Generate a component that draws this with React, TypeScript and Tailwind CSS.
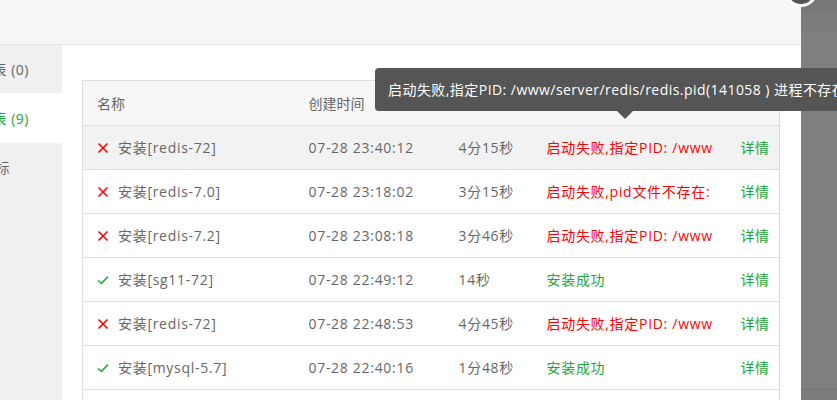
import React from "react";

type Row = {
  ok: boolean;
  name: string;
  time: string;
  cost: string;
  status: string;
  hover?: boolean;
};

const ROWS: Row[] = [
  { ok: false, name: "安装[redis-72]", time: "07-28 23:40:12", cost: "4分15秒", status: "启动失败,指定PID: /www/server/redis/redis.pid(141058 ) 进程不存在", hover: true },
  { ok: false, name: "安装[redis-7.0]", time: "07-28 23:18:02", cost: "3分15秒", status: "启动失败,pid文件不存在: /www/server/redis/redis.pid" },
  { ok: false, name: "安装[redis-7.2]", time: "07-28 23:08:18", cost: "3分46秒", status: "启动失败,指定PID: /www/server/redis/redis.pid" },
  { ok: true, name: "安装[sg11-72]", time: "07-28 22:49:12", cost: "14秒", status: "安装成功" },
  { ok: false, name: "安装[redis-72]", time: "07-28 22:48:53", cost: "4分45秒", status: "启动失败,指定PID: /www/server/redis/redis.pid" },
  { ok: true, name: "安装[mysql-5.7]", time: "07-28 22:40:16", cost: "1分48秒", status: "安装成功" },
  { ok: true, name: "安装[php-7.2]", time: "07-28 22:30:01", cost: "2分10秒", status: "安装成功" },
];

const FONT = { fontFamily: '"Open Sans", "Noto Sans CJK SC", sans-serif' };

function StatusIcon({ ok }: { ok: boolean }) {
  if (ok) {
    return (
      <svg width="12" height="12" viewBox="0 0 12 12" className="shrink-0">
        <path d="M1 6.5 L4.5 9.5 L11 2.5" fill="none" stroke="#20a53a" strokeWidth="1.6" />
      </svg>
    );
  }
  return (
    <svg width="12" height="12" viewBox="0 0 12 12" className="shrink-0">
      <path d="M1.5 1.5 L10.5 10.5 M10.5 1.5 L1.5 10.5" fill="none" stroke="#f00" strokeWidth="1.6" />
    </svg>
  );
}

function Sidebar() {
  const items = [
    { label: "列表 (0)", active: false, h: "h-[48px]", ml: "ml-[-22px]" },
    { label: "列表 (9)", active: true, h: "h-[50px]", ml: "ml-[-22px]" },
    { label: "指标", active: false, h: "h-[48px]", ml: "ml-[-19px]" },
  ];
  return (
    <div className="w-[62px] shrink-0 overflow-hidden bg-[#f0f0f0] tracking-[0.5px]">
      {items.map((it) => (
        <div
          key={it.label}
          className={`${it.h} flex items-center whitespace-nowrap text-[14px] ${
            it.active ? "bg-white text-[#20a53a]" : "text-[#666]"
          }`}
        >
          <span className={it.ml}>{it.label}</span>
        </div>
      ))}
    </div>
  );
}

function TaskTable() {
  return (
    <table className="w-[697px] table-fixed border-collapse border border-[#ddd] text-[14px] tracking-[0.7px] text-[#666]">
      <colgroup>
        <col className="w-[212px]" />
        <col className="w-[150px]" />
        <col className="w-[88px]" />
        <col className="w-[194px]" />
        <col className="w-[53px]" />
      </colgroup>
      <thead>
        <tr className="h-[45px] border-b border-[#ddd] bg-[#f6f6f6]">
          <th className="whitespace-nowrap px-[14px] text-left font-normal tracking-normal">名称</th>
          <th className="whitespace-nowrap px-[14px] text-left font-normal tracking-normal">创建时间</th>
          <th className="whitespace-nowrap px-[14px] text-left font-normal tracking-normal">耗时</th>
          <th className="whitespace-nowrap px-[14px] text-left font-normal tracking-normal">状态</th>
          <th className="whitespace-nowrap pl-[14px] text-left font-normal tracking-normal">操作</th>
        </tr>
      </thead>
      <tbody>
        {ROWS.map((r, i) => (
          <tr key={i} className={`h-[44px] border-b border-[#ddd] ${r.hover ? "bg-[#f2f2f2]" : "bg-white"}`}>
            <td className="px-[14px]">
              <div className="flex items-center gap-[9px] whitespace-nowrap">
                <StatusIcon ok={r.ok} />
                <span>{r.name}</span>
              </div>
            </td>
            <td className="px-[14px] whitespace-nowrap">{r.time}</td>
            <td className="px-[14px] whitespace-nowrap">{r.cost}</td>
            <td className={`pl-[14px] pr-[15px] ${r.ok ? "text-[#20a53a]" : "text-[#f00]"}`}>
              <div className="overflow-hidden whitespace-nowrap">{r.status}</div>
            </td>
            <td className="pl-[14px] whitespace-nowrap tracking-[0.5px] text-[#20a53a]">详情</td>
          </tr>
        ))}
      </tbody>
    </table>
  );
}

export default function App() {
  return (
    <div className="relative flex h-[400px] w-[837px] overflow-hidden bg-[#7f7f7f]" style={FONT}>
      <div className="flex w-[801px] shrink-0 flex-col bg-white">
        <div className="h-[45px] shrink-0 border-b border-[#e6e6e6] bg-[#f6f6f6]" />
        <div className="flex flex-1">
          <Sidebar />
          <div className="flex-1 pl-[20px] pt-[35px]">
            <TaskTable />
          </div>
        </div>
      </div>

      <div className="flex flex-1 flex-col">
        <div className="h-[12px] bg-[#777]" />
        <div className="h-[20px] bg-[#7b7b7b]" />
        <div className="h-[328px] bg-[#7f7f7f]" />
        <div className="h-[29px] bg-[#7e7f81]" />
        <div className="h-[1px] bg-[#747474]" />
        <div className="flex-1 bg-[#7c7c7c]" />
      </div>

      {/* close button */}
      <div className="absolute left-[784px] top-[-27px] h-[34px] w-[34px] rounded-full border-[3px] border-white bg-[#555]" />

      {/* tooltip */}
      <div className="absolute left-[375px] top-[68px] flex h-[43px] items-center whitespace-nowrap rounded-[4px] bg-[#555] pl-[13px] pr-[13px] text-[14px] tracking-[0.45px] text-white">
        启动失败,指定PID: /www/server/redis/redis.pid(141058 ) 进程不存在
        <div className="absolute left-[242px] top-[43px] h-0 w-0 border-x-[8px] border-t-[8px] border-x-transparent border-t-[#555]" />
      </div>
    </div>
  );
}
